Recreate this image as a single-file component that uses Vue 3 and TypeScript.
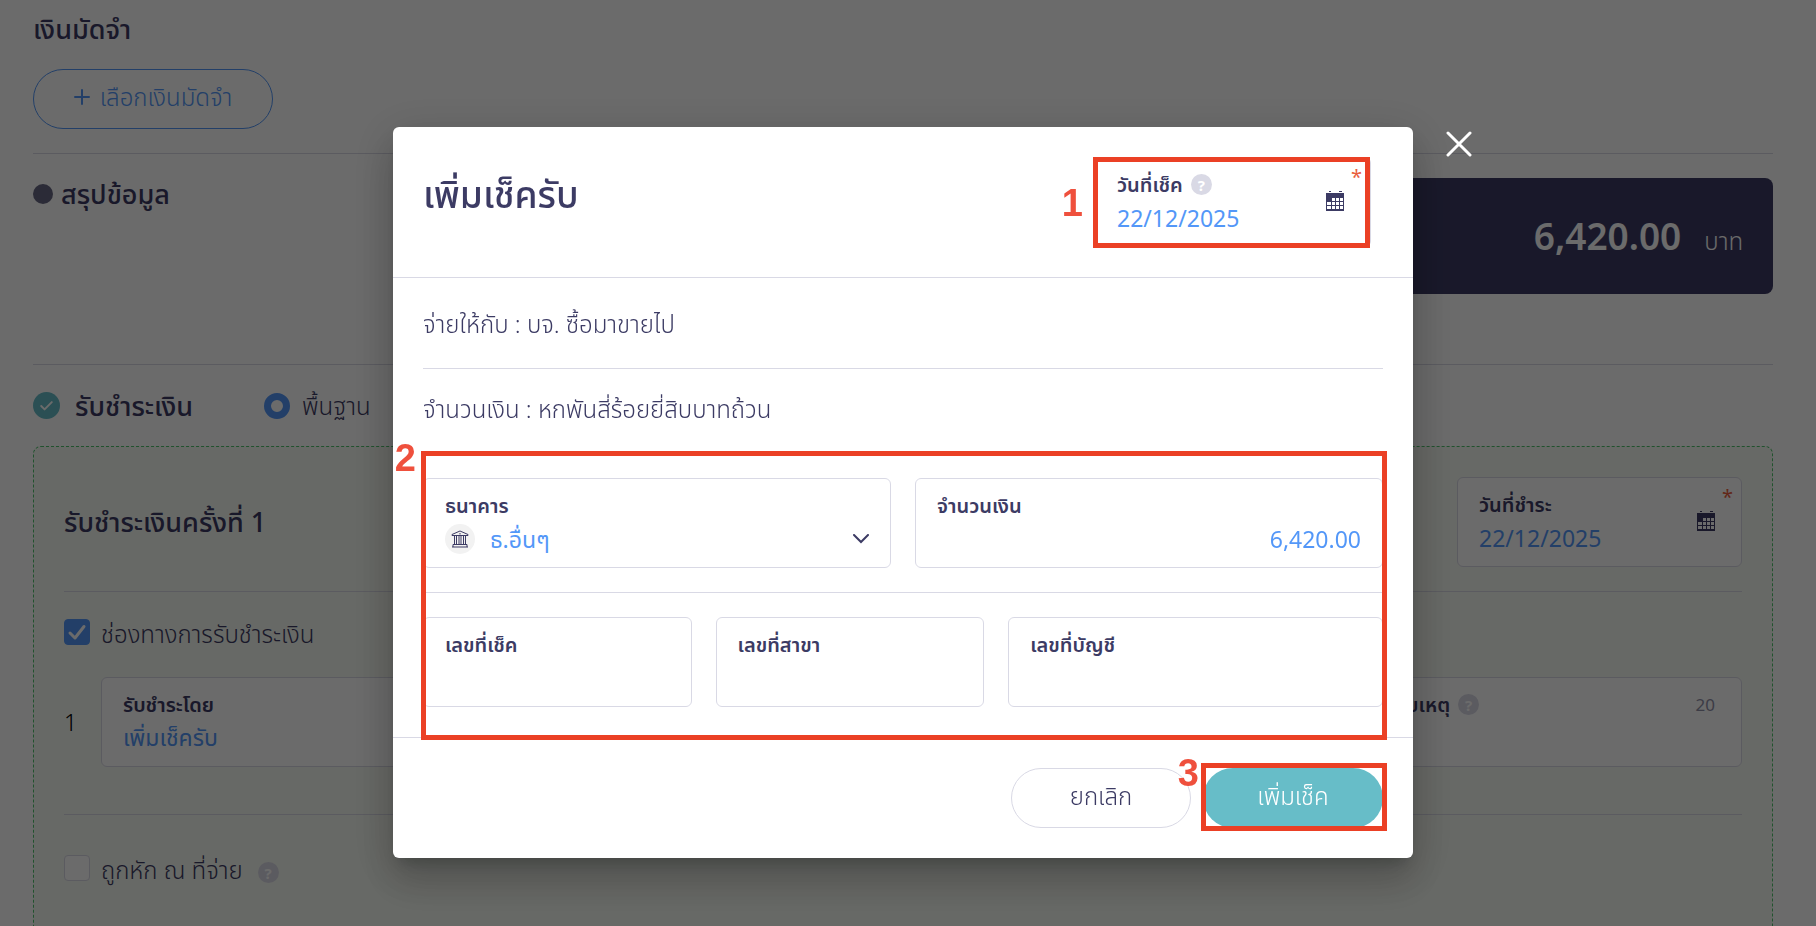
<script setup lang="ts">
import { ref } from 'vue'

const payMode = ref('basic')
const channelOn = ref(true)
const withheld = ref(false)
const paidDate = ref('22/12/2025')
const paidBy = ref('เพิ่มเช็ครับ')
const note = ref('')

const chequeDate = ref('22/12/2025')
const bank = ref('other')
const amount = ref('6,420.00')
const chequeNo = ref('')
const branchNo = ref('')
const accountNo = ref('')
</script>

<template>
  <div class="page">
    <main class="content">
      <section class="deposit">
        <h2 class="heading">เงินมัดจำ</h2>
        <button type="button" class="pill pill-outline">
          <svg class="plus" viewBox="0 0 16 16" aria-hidden="true"><path d="M8 1v14M1 8h14" /></svg>
          <span>เลือกเงินมัดจำ</span>
        </button>
      </section>

      <section class="summary">
        <h2 class="heading bulleted"><span class="bullet"></span>สรุปข้อมูล</h2>
        <div class="total"><strong>6,420.00</strong><span>บาท</span></div>
      </section>

      <section class="receive">
        <header class="receive-head">
          <svg class="tick" viewBox="0 0 28 28" aria-hidden="true">
            <circle cx="14" cy="14" r="14" /><path d="M8.5 14.5l3.5 3.5 7.500-7.500" />
          </svg>
          <h2 class="heading">รับชำระเงิน</h2>
          <label class="radio"><input v-model="payMode" type="radio" name="mode" value="basic" />พื้นฐาน</label>
        </header>

        <div class="panel">
          <div class="panel-head">
            <h3 class="heading">รับชำระเงินครั้งที่ 1</h3>
            <div class="field paid-date">
              <label for="paid-date">วันที่ชำระ</label>
              <input id="paid-date" v-model="paidDate" type="text" />
              <span class="required">*</span>
              <svg class="calendar" viewBox="0 0 18 20" aria-hidden="true">
                <path class="solid" d="M3 0h2v1H3zM13 0h3v1h-3zM0 2h18v18H0z" />
                <path class="cells" d="M6 7h3v3H6zM10 7h3v3h-3zM14 7h3v3h-3zM1 11h4v3H1zM6 11h3v3H6zM10 11h3v3h-3zM14 11h3v3h-3zM1 15h4v3H1zM6 15h3v3H6zM10 15h3v3h-3zM14 15h3v3h-3z" />
              </svg>
            </div>
          </div>

          <label class="check">
            <span class="box">
              <input v-model="channelOn" type="checkbox" />
              <svg v-if="channelOn" viewBox="0 0 26 26" aria-hidden="true"><path d="M6 14l5 5L20 7.500" /></svg>
            </span>
            ช่องทางการรับชำระเงิน
          </label>

          <div class="channel">
            <span class="index">1</span>
            <div class="field by">
              <label for="paid-by">รับชำระโดย</label>
              <input id="paid-by" v-model="paidBy" type="text" />
            </div>
            <div class="field note">
              <label for="note">หมายเหตุ <span class="help">?</span></label>
              <input id="note" v-model="note" type="text" maxlength="20" />
              <span class="counter">20</span>
            </div>
          </div>

          <label class="check withheld">
            <span class="box">
              <input v-model="withheld" type="checkbox" />
              <svg v-if="withheld" viewBox="0 0 26 26" aria-hidden="true"><path d="M6 14l5 5L20 7.500" /></svg>
            </span>
            ถูกหัก ณ ที่จ่าย
            <span class="help">?</span>
          </label>
        </div>
      </section>
    </main>

    <div class="overlay">
      <div class="dialog" role="dialog" aria-modal="true" aria-labelledby="dialog-title">
        <button type="button" class="close" aria-label="ปิด">
          <svg viewBox="0 0 26 26" aria-hidden="true"><path d="M2 2l22 22M24 2L2 24" /></svg>
        </button>

        <header class="dialog-head">
          <h1 id="dialog-title">เพิ่มเช็ครับ</h1>
          <div class="field cheque-date">
            <label for="cheque-date">วันที่เช็ค <span class="help">?</span></label>
            <input id="cheque-date" v-model="chequeDate" type="text" />
            <span class="required">*</span>
            <svg class="calendar" viewBox="0 0 18 20" aria-hidden="true">
              <path class="solid" d="M3 0h2v1H3zM13 0h3v1h-3zM0 2h18v18H0z" />
              <path class="cells" d="M6 7h3v3H6zM10 7h3v3h-3zM14 7h3v3h-3zM1 11h4v3H1zM6 11h3v3H6zM10 11h3v3h-3zM14 11h3v3h-3zM1 15h4v3H1zM6 15h3v3H6zM10 15h3v3h-3zM14 15h3v3h-3z" />
            </svg>
            <div class="mark mark-date"><b>1</b></div>
          </div>
        </header>

        <div class="dialog-body">
          <p class="payee">จ่ายให้กับ : บจ. ซื้อมาขายไป</p>
          <p class="words">จำนวนเงิน : หกพันสี่ร้อยยี่สิบบาทถ้วน</p>

          <div class="form">
            <div class="row row-bank">
              <div class="field">
                <label for="bank">ธนาคาร</label>
                <div class="bank">
                  <span class="bank-icon">
                    <svg viewBox="0 0 18 18" aria-hidden="true">
                      <path d="M1 5.500V4.500L9 1l8 3.500v1zM1 17h16M2 14.500h14v2.500M2 14.500v2.500M3.500 6v8M5.500 6v8M8 6v8M10 6v8M12.500 6v8M14.500 6v8M9 3v1.500" />
                    </svg>
                  </span>
                  <select id="bank" v-model="bank"><option value="other">ธ.อื่นๆ</option></select>
                  <svg class="chevron" viewBox="0 0 16 10" aria-hidden="true"><path d="M1 1l7 7 7-7" /></svg>
                </div>
              </div>
              <div class="field">
                <label for="amount">จำนวนเงิน</label>
                <input id="amount" v-model="amount" class="number" type="text" />
              </div>
            </div>
            <div class="row row-numbers">
              <div class="field">
                <label for="cheque-no">เลขที่เช็ค</label>
                <input id="cheque-no" v-model="chequeNo" type="text" />
              </div>
              <div class="field">
                <label for="branch-no">เลขที่สาขา</label>
                <input id="branch-no" v-model="branchNo" type="text" />
              </div>
              <div class="field">
                <label for="account-no">เลขที่บัญชี</label>
                <input id="account-no" v-model="accountNo" type="text" />
              </div>
            </div>
            <div class="mark mark-form"><b>2</b></div>
          </div>
        </div>

        <footer class="dialog-foot">
          <button type="button" class="pill pill-plain">ยกเลิก</button>
          <div class="submit">
            <button type="button" class="pill pill-solid">เพิ่มเช็ค</button>
            <div class="mark mark-submit"><b>3</b></div>
          </div>
        </footer>
      </div>
    </div>
  </div>
</template>

<style>
body {
  margin: 0;
}
</style>

<style scoped>
* {
  box-sizing: border-box;
}

.page {
  --ink: #3c3b64;
  --blue: #5397f8;
  --line: #d9d9e5;
  --red: #eb4025;
  height: 100vh;
  overflow: hidden;
  background: #fff;
  color: var(--ink);
  font-family: "Noto Sans", "Noto Sans Thai", "Prompt", "Kanit", "Sarabun", sans-serif;
  font-size: 24px;
  font-weight: 350;
  line-height: 30px;
}

h1,
h2,
h3,
p {
  margin: 0;
}

button,
input,
select {
  font: inherit;
  color: inherit;
}

svg {
  display: block;
  fill: none;
  stroke: currentColor;
}

.content {
  padding: 0 43px 0 33px;
}

.heading {
  font-size: 27px;
  font-weight: 550;
  line-height: 30px;
}

.pill {
  display: flex;
  align-items: center;
  justify-content: center;
  height: 60px;
  width: 180px;
  padding: 0 0 4px;
  border: 1px solid transparent;
  border-radius: 30px;
  background: transparent;
}

.pill-outline {
  width: 240px;
  gap: 10px;
  border-color: var(--blue);
  color: var(--blue);
}

.plus {
  width: 16px;
  height: 16px;
  stroke-width: 2;
  stroke-linecap: round;
}

.deposit {
  display: flex;
  flex-direction: column;
  align-items: flex-start;
  gap: 25px;
  padding: 14px 0 24px;
  border-bottom: 1px solid var(--line);
}

.summary {
  display: flex;
  justify-content: space-between;
  align-items: flex-start;
  padding: 24px 0 70px;
  border-bottom: 1px solid var(--line);
}

.bulleted {
  display: flex;
  align-items: center;
  gap: 8px;
  line-height: 32px;
}

.bullet {
  width: 20px;
  height: 20px;
  border-radius: 50%;
  background: #686883;
}

.total {
  display: flex;
  align-items: baseline;
  justify-content: flex-end;
  gap: 23px;
  width: 40%;
  height: 116px;
  padding: 34px 30px;
  border-radius: 8px;
  background: var(--ink);
  color: #fff;
}

.total strong {
  font-size: 37px;
  font-weight: 600;
  line-height: 48px;
}

.receive-head {
  display: flex;
  align-items: center;
  height: 81px;
}

.tick {
  width: 27px;
  height: 27px;
  margin-right: 15px;
  stroke-width: 2;
  stroke-linecap: round;
  stroke-linejoin: round;
}

.tick circle {
  fill: #67bdc8;
  stroke: none;
}

.tick path {
  stroke: #fff;
}

.radio {
  display: flex;
  align-items: center;
  gap: 12px;
  margin-left: 71px;
}

.radio input {
  appearance: none;
  width: 26px;
  height: 26px;
  margin: 0;
  border: 7px solid var(--blue);
  border-radius: 50%;
  background: #fff;
}

.panel {
  padding: 30px 30px 80px;
  border: 1px dashed #4fc46f;
  border-radius: 8px;
  background: #f6faf2;
}

.panel-head {
  display: flex;
  justify-content: space-between;
  align-items: center;
  padding-bottom: 24px;
  border-bottom: 1px solid var(--line);
}

.field {
  position: relative;
  display: flex;
  flex-direction: column;
  min-width: 0;
  height: 90px;
  padding: 10px 21px;
  border: 1px solid var(--line);
  border-radius: 6px;
  background: #fff;
}

.field label {
  display: flex;
  align-items: center;
  gap: 8px;
  font-size: 20px;
  font-weight: 600;
  line-height: 33px;
}

.field input {
  width: 100%;
  height: 34px;
  padding: 0;
  border: 0;
  background: transparent;
  color: var(--blue);
  font-size: 23px;
  font-weight: 400;
  outline: none;
}

.field input.number {
  text-align: right;
}

.paid-date {
  width: 285px;
}

.required {
  position: absolute;
  top: 4px;
  right: 8px;
  color: #e9603e;
  font-size: 20px;
  font-weight: 400;
}

.calendar {
  position: absolute;
  top: 33px;
  right: 26px;
  width: 18px;
  height: 20px;
  stroke: none;
}

.calendar .solid {
  fill: var(--ink);
}

.calendar .cells {
  fill: #fff;
}

.help {
  display: inline-flex;
  align-items: center;
  justify-content: center;
  width: 21px;
  height: 21px;
  border-radius: 50%;
  background: var(--line);
  color: #fff;
  font-size: 15px;
  font-weight: 700;
  line-height: 20px;
}

.check {
  display: flex;
  align-items: flex-start;
  gap: 11px;
  height: 26px;
  margin-top: 27px;
}

.box {
  display: grid;
}

.box input,
.box svg {
  grid-area: 1 / 1;
  width: 26px;
  height: 26px;
}

.box input {
  appearance: none;
  margin: 0;
  border: 1px solid var(--line);
  border-radius: 4px;
  background: #fff;
}

.box input:checked {
  border-color: var(--blue);
  background: var(--blue);
}

.box svg {
  color: #fff;
  stroke-width: 3;
  stroke-linecap: round;
  stroke-linejoin: round;
  pointer-events: none;
}

.channel {
  display: flex;
  align-items: center;
  gap: 24px;
  padding: 32px 0 47px;
  border-bottom: 1px solid var(--line);
}

.index {
  width: 13px;
  color: #000;
  font-size: 23px;
}

.by {
  flex: 1;
}

.note {
  width: 391px;
}

.counter {
  position: absolute;
  top: 12px;
  right: 26px;
  color: #8f8fa8;
  font-size: 17px;
  font-weight: 400;
}

.withheld {
  margin-top: 40px;
}

.withheld .help {
  margin: 7px 0 0 4px;
}

.overlay {
  position: fixed;
  inset: 0;
  padding: 127px 10px 0 0;
  background: rgba(0, 0, 0, 0.58);
}

.dialog {
  position: relative;
  width: min(1020px, 90%);
  margin: 0 auto;
  border-radius: 6px;
  background: #fff;
  box-shadow: 0 11px 15px -7px rgba(0, 0, 0, 0.2), 0 24px 38px 3px rgba(0, 0, 0, 0.14), 0 9px 46px 8px rgba(0, 0, 0, 0.12);
}

.close {
  position: absolute;
  top: 4px;
  left: calc(100% + 33px);
  padding: 0;
  border: 0;
  background: transparent;
  color: #fff;
}

.close svg {
  width: 26px;
  height: 26px;
  stroke-width: 3;
  stroke-linecap: round;
}

.dialog-head {
  display: flex;
  justify-content: space-between;
  align-items: flex-start;
  padding: 30px 42px 30px 30px;
  border-bottom: 1px solid var(--line);
}

.dialog-head h1 {
  font-size: 37px;
  font-weight: 550;
  line-height: 74px;
}

.cheque-date {
  width: 276px;
}

.dialog-body {
  padding: 0 30px;
}

.payee {
  padding: 31px 0 29px;
  border-bottom: 1px solid var(--line);
}

.words {
  padding: 25px 0 23px;
}

.form {
  position: relative;
  padding: 31px 0 30px;
}

.row {
  display: grid;
  gap: 24px;
}

.row-bank {
  grid-template-columns: 1fr 1fr;
  padding-bottom: 24px;
  border-bottom: 1px solid var(--line);
}

.row-numbers {
  grid-template-columns: 43fr 43fr 60fr;
  padding-top: 24px;
}

.bank {
  display: flex;
  align-items: center;
  gap: 15px;
  height: 34px;
  color: var(--blue);
}

.bank-icon {
  display: grid;
  place-items: center;
  width: 30px;
  height: 30px;
  border-radius: 50%;
  background: #f2f2f2;
  color: var(--ink);
}

.bank-icon svg {
  width: 18px;
  height: 18px;
}

.bank select {
  flex: 1;
  appearance: none;
  padding: 0;
  border: 0;
  background: transparent;
  font-size: 23px;
  font-weight: 400;
  outline: none;
}

.chevron {
  width: 16px;
  height: 10px;
  color: var(--ink);
  stroke-width: 2;
  stroke-linecap: round;
}

.dialog-foot {
  display: flex;
  justify-content: flex-end;
  gap: 12px;
  padding: 30px;
  border-top: 1px solid var(--line);
}

.pill-plain {
  border-color: var(--line);
}

.pill-solid {
  background: #67bdc8;
  color: #fff;
}

.submit {
  position: relative;
}

.mark {
  position: absolute;
  border: 5px solid var(--red);
  pointer-events: none;
}

.mark b {
  position: absolute;
  color: #ef503d;
  font-family: "Liberation Sans", Arial, sans-serif;
  font-size: 38px;
  font-weight: 700;
  line-height: 38px;
}

.mark-date {
  inset: -1px 0 -2px -3px;
}

.mark-date b {
  top: 22px;
  right: calc(100% + 15px);
}

.mark-form {
  inset: 4px -4px -3px -2px;
}

.mark-form b {
  top: -17px;
  right: calc(100% + 10px);
}

.mark-submit {
  inset: -5px -4px -3px -2px;
}

.mark-submit b {
  top: -14px;
  right: calc(100% + 7px);
}
</style>
